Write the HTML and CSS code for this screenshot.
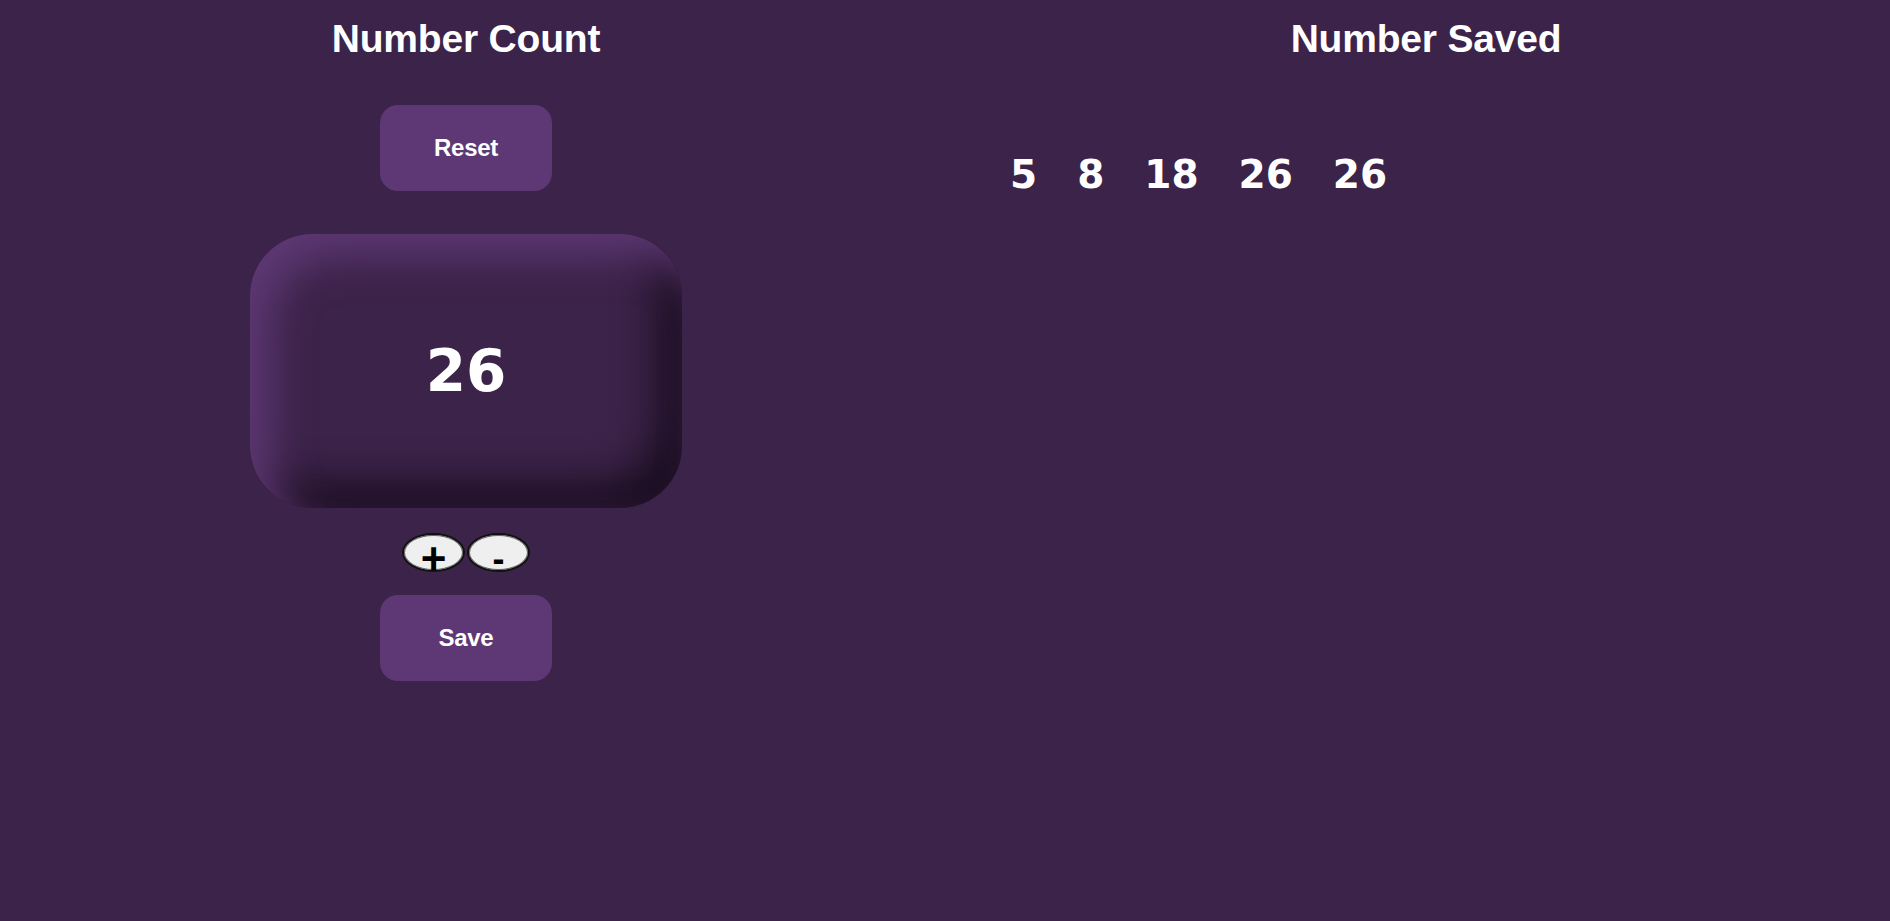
FILE: index.html
```html
<!DOCTYPE html>
<html>
<head>
<meta charset="utf-8">
<title>Counter</title>
<link rel="stylesheet" href="styles.css">
</head>
<body>
<main class="layout">
  <section class="col col-count">
    <h1 class="title">Number Count</h1>
    <button class="action">Reset</button>
    <div class="display">26</div>
    <div class="steppers">
      <button class="step step-plus">+</button><button class="step step-minus">-</button>
    </div>
    <button class="action action-save">Save</button>
  </section>
  <section class="col col-saved">
    <h1 class="title">Number Saved</h1>
    <ul class="saved">
      <li>5</li>
      <li>8</li>
      <li>18</li>
      <li>26</li>
      <li>26</li>
    </ul>
  </section>
</main>
</body>
</html>
```
FILE: styles.css
```css
html, body {
  margin: 0;
  padding: 0;
  background: #3c2349;
  color: #ffffff;
  font-family: "Liberation Sans", Arial, sans-serif;
}

.layout {
  display: grid;
  grid-template-columns: 916px 912px;
  column-gap: 46px;
  padding: 0 8px;
  height: 921px;
  box-sizing: border-box;
}

.col {
  display: flex;
  flex-direction: column;
}

.col-count {
  align-items: center;
}

.title {
  margin: 16px 0 0;
  font-size: 39px;
  line-height: 46px;
  font-weight: 700;
  text-align: center;
  letter-spacing: -0.2px;
}

.action {
  margin-top: 43px;
  width: 172px;
  height: 86px;
  border: none;
  border-radius: 18px;
  background: #5e3874;
  color: #ffffff;
  font-family: "Liberation Sans", Arial, sans-serif;
  font-weight: 700;
  font-size: 24px;
  letter-spacing: -0.3px;
  padding: 0;
  cursor: pointer;
}

.action-save {
  margin-top: 23px;
}

.display {
  margin-top: 43px;
  width: 432px;
  height: 274px;
  border-radius: 62px;
  background: #3c2349;
  box-shadow: inset 22px 22px 40px #5e3874, inset -24px -24px 40px #1a0e20;
  display: flex;
  align-items: center;
  justify-content: center;
  font-family: "DejaVu Sans", sans-serif;
  font-weight: 700;
  font-size: 58px;
}

.steppers {
  margin-top: 25px;
  display: flex;
  gap: 2px;
}

.step {
  width: 63px;
  height: 39px;
  border-radius: 50%;
  border: 2px solid #111111;
  background: #efefef;
  color: #000000;
  font-family: "Liberation Sans", Arial, sans-serif;
  font-weight: 700;
  font-size: 36px;
  line-height: 24px;
  padding: 12px 0 0;
  box-sizing: border-box;
  box-shadow: inset 0 0 0 1px #6a6a6a;
  overflow: visible;
}

.step-plus {
  font-size: 44px;
}

.saved {
  list-style: none;
  margin: 88px 0 0;
  padding: 0 0 0 40px;
  display: flex;
  gap: 40px;
  font-family: "DejaVu Sans", sans-serif;
  font-weight: 700;
  font-size: 39px;
  line-height: 50px;
}
```
